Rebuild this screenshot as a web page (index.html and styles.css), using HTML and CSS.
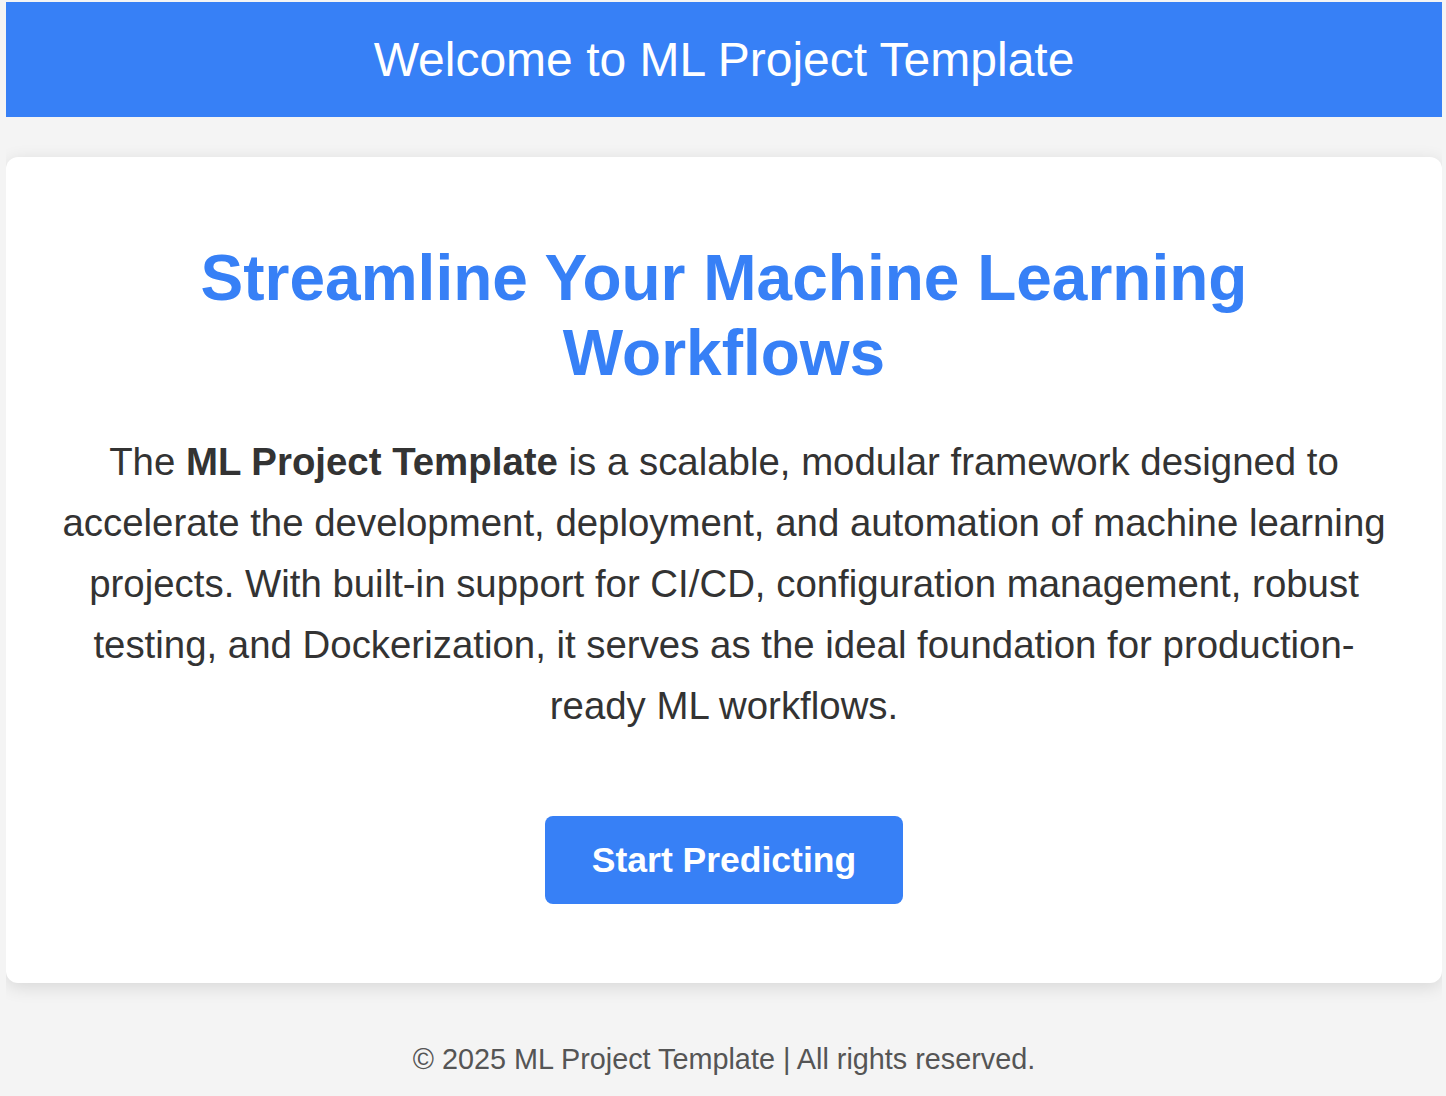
FILE: index.html
```html
<!DOCTYPE html>
<html lang="en">
<head>
<meta charset="utf-8">
<title>ML Project Template</title>
<link rel="stylesheet" href="styles.css">
</head>
<body>
  <header class="site-header">
    <h1 class="site-title">Welcome to ML Project Template</h1>
  </header>
  <main class="card">
    <h2 class="card-title">Streamline Your Machine Learning Workflows</h2>
    <p class="card-text">The <strong>ML Project Template</strong> is a scalable, modular framework designed to accelerate the development, deployment, and automation of machine learning projects. With built-in support for CI/CD, configuration management, robust testing, and Dockerization, it serves as the ideal foundation for production-ready ML workflows.</p>
    <div class="actions">
      <a class="btn" href="#">Start Predicting</a>
    </div>
  </main>
  <footer class="site-footer">
    <p class="footer-text">&copy; 2025 ML Project Template | All rights reserved.</p>
  </footer>
</body>
</html>
```
FILE: styles.css
```css
html, body {
  background: #f4f4f4;
}
body {
  margin: 2px 4px 0 6px;
  font-family: "Liberation Sans", Arial, Helvetica, sans-serif;
  color: #333;
}
.site-header {
  background: #3780f6;
  padding: 31px 20px 30px;
  text-align: center;
}
.site-title {
  margin: 0;
  font-size: 48px;
  font-weight: normal;
  line-height: 54px;
  color: #fff;
}
.card {
  display: block;
  margin-top: 40px;
  background: #fff;
  border-radius: 12px;
  box-shadow: 0 4px 18px rgba(0, 0, 0, 0.12);
  padding: 84px 50px 79px;
  text-align: center;
}
.card-title {
  margin: 0 0 40px;
  font-size: 64px;
  line-height: 75px;
  font-weight: bold;
  color: #3780f6;
}
.card-text {
  margin: 0 0 80px;
  font-size: 38.4px;
  line-height: 61px;
  color: #333;
}
.card-text strong {
  font-weight: bold;
}
.actions {
  display: flex;
  justify-content: center;
}
.btn {
  display: block;
  background: #3780f6;
  color: #fff;
  text-decoration: none;
  font-weight: bold;
  font-size: 35.5px;
  line-height: 40px;
  padding: 24px 47px;
  border-radius: 8px;
}
.site-footer {
  padding-top: 60px;
  text-align: center;
}
.footer-text {
  margin: 0;
  font-size: 28.8px;
  color: #555;
}
```
